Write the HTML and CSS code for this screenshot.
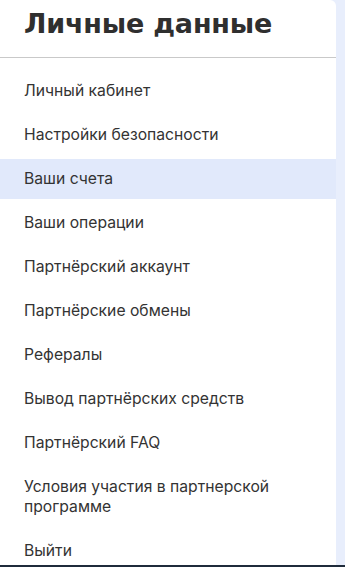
FILE: index.html
```html
<!DOCTYPE html>
<html lang="ru">
    <head>
        <meta charset="utf-8">
        <title>Личные данные</title>
        <link rel="stylesheet" href="styles.css">
    </head>
    <body>
        <aside class="sidebar">
            <h2 class="sidebar-title">Личные данные</h2>
            <nav class="sidebar-menu">
                <a href="#" class="menu-item">Личный кабинет</a>
                <a href="#" class="menu-item">Настройки безопасности</a>
                <a href="#" class="menu-item active">Ваши счета</a>
                <a href="#" class="menu-item">Ваши операции</a>
                <a href="#" class="menu-item">Партнёрский аккаунт</a>
                <a href="#" class="menu-item">Партнёрские обмены</a>
                <a href="#" class="menu-item">Рефералы</a>
                <a href="#" class="menu-item">Вывод партнёрских средств</a>
                <a href="#" class="menu-item">Партнёрский FAQ</a>
                <a href="#" class="menu-item">Условия участия в партнерской программе</a>
                <a href="#" class="menu-item">Выйти</a>
            </nav>
        </aside>
        <div class="footer-line"></div>
    </body>
</html>
```

FILE: styles.css
```css
html, body {
    margin: 0;
    padding: 0;
}
body {
    background: #e8eefc;
    font-family: Inter, "Noto Sans", sans-serif;
    color: #333333;
    height: 567px;
    overflow: hidden;
}
.sidebar {
    width: 336px;
    height: 565px;
    background: #ffffff;
    border-top-right-radius: 6px;
}
.sidebar-title {
    margin: 0;
    height: 58px;
    box-sizing: border-box;
    padding: 8px 0 0 24px;
    font-family: "DejaVu Sans", sans-serif;
    font-size: 27px;
    line-height: 32px;
    font-weight: bold;
    letter-spacing: -0.2px;
    color: #2f2f2f;
    border-bottom: 1px solid #c9c9c9;
}
.sidebar-menu {
    display: flex;
    flex-direction: column;
    gap: 4px;
    padding-top: 13px;
}
.menu-item {
    display: block;
    padding: 10px 40px 10px 24px;
    font-size: 15.7px;
    line-height: 20px;
    color: #333333;
    text-decoration: none;
}
.menu-item.active {
    background: #e1e9fb;
}
.footer-line {
    height: 2px;
    background: #1f2b3b;
}
```
